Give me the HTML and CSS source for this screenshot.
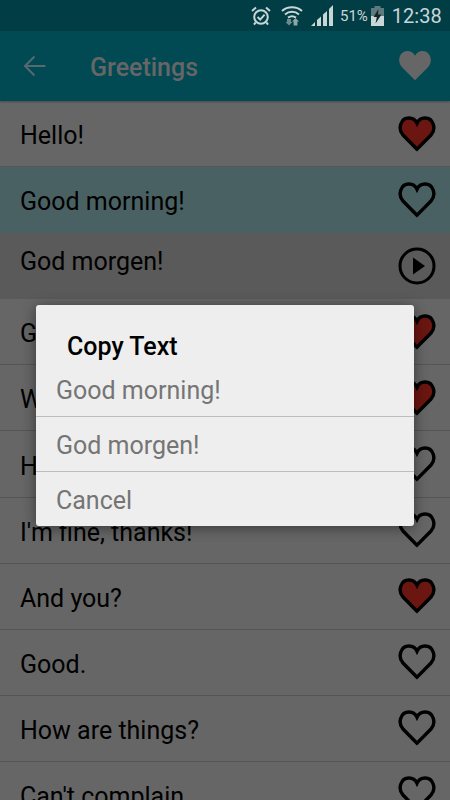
FILE: index.html
```html
<!DOCTYPE html>
<html lang="en">
<head>
    <meta charset="UTF-8">
    <meta name="viewport" content="width=device-width, initial-scale=1.0">
    <title>Greetings</title>
    <link rel="stylesheet" href="styles.css">
</head>
<body>
    <svg class="defs" width="0" height="0">
        <symbol id="heart" viewBox="0 0 38 36">
            <path d="M19 33.2 L5 19 C-0.5 13 2.5 2 11 2 C14.5 2 17.5 4 19 7.2 C20.5 4 23.5 2 27 2 C35.5 2 38.5 13 33 19 Z"/>
        </symbol>
    </svg>

    <div class="status-bar">
        <svg class="status-alarm" width="20" height="20" viewBox="0 0 20 20">
            <circle cx="10" cy="11" r="6.8"/>
            <path d="M6.6 11 L9.2 13.6 L13.6 8.6"/>
            <path d="M1 5 L5 1.4 M19 5 L15 1.4 M4.6 16.4 L3 18.6 M15.4 16.4 L17 18.6"/>
        </svg>
        <svg class="status-wifi" width="22" height="21" viewBox="0 0 22 21">
            <path class="wifi-arc" d="M1 6 C6.5 1 15.5 1 21 6"/>
            <path class="wifi-arc" d="M4 9.4 C8 6 14 6 18 9.4"/>
            <path class="wifi-arc" d="M7 12.6 C9.5 10.8 12.500 10.800 15 12.6"/>
            <path class="wifi-down" d="M6 14 H10 V17 H11.500 L8 20.500 L4.500 17 H6 Z"/>
            <path class="wifi-up" d="M14.500 13 L18 16.500 H16.400 V20.500 H12.600 V16.500 H11 Z"/>
        </svg>
        <svg class="status-signal" width="22" height="21" viewBox="0 0 22 21">
            <path d="M0 21 L4 17 V21 Z"/>
            <path d="M6 15 L10 11.500 V21 H6 Z"/>
            <path d="M12 9.500 L16 6 V21 H12 Z"/>
            <path d="M18 4 L22 0 V21 H18 Z"/>
        </svg>
        <span class="status-battery-text">51%</span>
        <svg class="status-battery" width="13" height="20" viewBox="0 0 13 20">
            <path class="battery-empty" d="M3.500 0 H9.500 V2 H13 V10 H0 V2 H3.500 Z"/>
            <path class="battery-full" d="M0 10 H13 V20 H0 Z"/>
            <path class="battery-bolt" d="M7.500 3 L2.500 11 H5.800 L4.500 17.500 L10.500 8.500 H7 Z"/>
        </svg>
        <span class="status-time">12:38</span>
    </div>

    <div class="screen">
        <header class="app-bar">
            <svg class="back-icon" width="24" height="24" viewBox="0 0 24 24">
                <path d="M22.500 12 H2.500 M11.500 2.500 L2 12 L11.500 21.500"/>
            </svg>
            <h1 class="app-title">Greetings</h1>
            <svg class="heart-solid" width="36" height="34"><use href="#heart"/></svg>
        </header>

        <div class="phrase-list">
            <div class="phrase-row">
                <span class="phrase-text">Hello!</span>
                <svg class="heart-icon heart-on"><use href="#heart"/></svg>
            </div>
            <div class="phrase-row phrase-row-selected">
                <span class="phrase-text">Good morning!</span>
                <svg class="heart-icon"><use href="#heart"/></svg>
            </div>
            <div class="phrase-row phrase-row-open">
                <span class="phrase-text phrase-text-raised">God morgen!</span>
                <svg class="play-icon" width="38" height="38" viewBox="0 0 38 38">
                    <circle cx="19" cy="19" r="17"/>
                    <path d="M15 10.500 L27 19 L15 27.500 Z"/>
                </svg>
            </div>
            <div class="phrase-row">
                <span class="phrase-text">Good evening!</span>
                <svg class="heart-icon heart-on"><use href="#heart"/></svg>
            </div>
            <div class="phrase-row">
                <span class="phrase-text">Welcome!</span>
                <svg class="heart-icon heart-on"><use href="#heart"/></svg>
            </div>
            <div class="phrase-row">
                <span class="phrase-text">How are you?</span>
                <svg class="heart-icon"><use href="#heart"/></svg>
            </div>
            <div class="phrase-row">
                <span class="phrase-text">I'm fine, thanks!</span>
                <svg class="heart-icon"><use href="#heart"/></svg>
            </div>
            <div class="phrase-row">
                <span class="phrase-text">And you?</span>
                <svg class="heart-icon heart-on"><use href="#heart"/></svg>
            </div>
            <div class="phrase-row">
                <span class="phrase-text">Good.</span>
                <svg class="heart-icon"><use href="#heart"/></svg>
            </div>
            <div class="phrase-row">
                <span class="phrase-text">How are things?</span>
                <svg class="heart-icon"><use href="#heart"/></svg>
            </div>
            <div class="phrase-row">
                <span class="phrase-text">Can't complain.</span>
                <svg class="heart-icon"><use href="#heart"/></svg>
            </div>
        </div>

        <div class="dialog">
            <div class="dialog-title">Copy Text</div>
            <div class="dialog-item dialog-item-first">Good morning!</div>
            <div class="dialog-item">God morgen!</div>
            <div class="dialog-item dialog-item-last">Cancel</div>
        </div>
    </div>
</body>
</html>
```

FILE: styles.css
```css
html, body {
    margin: 0;
    height: 100%;
    overflow: hidden;
}
body {
    font-family: Roboto, "Liberation Sans", sans-serif;
    background-color: #666666;
    color: #000;
}
.defs {
    display: block;
    height: 0;
}

/* status bar */
.status-bar {
    height: 31px;
    background-color: #013d45;
    display: flex;
    align-items: center;
    color: #c9d6d6;
    padding-left: 251px;
    box-sizing: border-box;
}
.status-alarm {
    margin-right: 10px;
    fill: none;
    stroke: #c9d6d6;
    stroke-width: 2;
}
.status-wifi {
    margin-right: 8px;
}
.wifi-arc {
    fill: none;
    stroke: #c9d6d6;
    stroke-width: 2;
}
.wifi-down {
    fill: #6d8a8c;
}
.wifi-up {
    fill: #8fa6a7;
}
.status-signal {
    margin-right: 7px;
    fill: #c9d6d6;
}
.status-battery-text {
    font-size: 15px;
    margin-right: 3px;
}
.status-battery {
    margin-right: 8px;
}
.battery-empty {
    fill: #5f7a7c;
}
.battery-full {
    fill: #c9d6d6;
}
.battery-bolt {
    fill: #10282c;
}
.status-time {
    font-size: 20px;
}

/* app bar and list, dimmed by the open dialog */
.screen {
    position: relative;
    height: 769px;
    overflow: hidden;
}
.app-bar {
    height: 70px;
    background-color: #014a54;
    display: flex;
    align-items: center;
    padding: 0 17px 0 23px;
    box-shadow: 0 1px 2px rgba(0, 0, 0, 0.3);
    position: relative;
}
.back-icon {
    fill: none;
    stroke: #56696d;
    stroke-width: 2;
    margin-right: 43px;
}
.app-title {
    flex-grow: 1;
    margin: 3px 0 0;
    font-size: 25px;
    font-weight: 500;
    color: #666666;
}
.heart-solid {
    fill: #666666;
}
.phrase-row {
    height: 66.1px;
    box-sizing: border-box;
    border-bottom: 1px solid #555555;
    display: flex;
    align-items: center;
    justify-content: space-between;
    padding: 0 14px 0 20px;
    background-color: #666666;
}
.phrase-row-selected {
    background-color: #4a6163;
    border-bottom-color: #4a6163;
}
.phrase-row-open {
    background-color: #5a5a5a;
    border-bottom-color: #5a5a5a;
}
.phrase-text {
    font-size: 25px;
    margin-top: 4px;
}
.phrase-text-raised {
    margin-top: 0;
    margin-bottom: 8px;
}
.heart-icon {
    width: 38px;
    height: 36px;
    fill: none;
    stroke: #000;
    stroke-width: 3.4;
    overflow: visible;
}
.heart-on {
    fill: #6b1610;
}
.play-icon {
    fill: #000;
}
.play-icon circle {
    fill: none;
    stroke: #000;
    stroke-width: 3;
}

/* dialog */
.dialog {
    position: absolute;
    left: 36px;
    top: 274px;
    width: 378px;
    height: 221px;
    box-sizing: border-box;
    background-color: #eeeeee;
    border-radius: 3px;
    box-shadow: 0 2px 14px rgba(0, 0, 0, 0.45);
}
.dialog-title {
    font-size: 25px;
    font-weight: 500;
    padding: 28px 0 0 31px;
    line-height: 28px;
    color: #000;
}
.dialog-item {
    font-size: 25px;
    color: #757575;
    padding-left: 20px;
    height: 55px;
    line-height: 57px;
    box-sizing: border-box;
    border-bottom: 1px solid #bcbcbc;
}
.dialog-item-first {
    height: 56px;
    line-height: 59px;
}
.dialog-item-last {
    border-bottom: none;
}
```
